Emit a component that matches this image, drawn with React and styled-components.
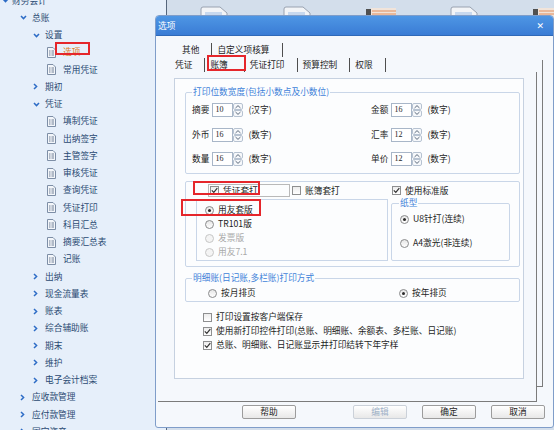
import styled, { createGlobalStyle } from "styled-components";

const GlobalStyle = createGlobalStyle`
  html, body {
    margin: 0;
    padding: 0;
  }
  body {
    width: 554px;
    height: 430px;
    overflow: hidden;
    font-family: "Noto Sans CJK SC", "Noto Sans", sans-serif;
    font-size: 8.7px;
    line-height: 12px;
    color: #1d1d1d;
  }
`;

const tree = [
  { level: 0, label: "财务会计", arrow: "down" },
  { level: 1, label: "总账", arrow: "down" },
  { level: 2, label: "设置", arrow: "down" },
  { level: 3, label: "选项", active: true },
  { level: 3, label: "常用凭证" },
  { level: 2, label: "期初", arrow: "right" },
  { level: 2, label: "凭证", arrow: "down" },
  { level: 3, label: "填制凭证" },
  { level: 3, label: "出纳签字" },
  { level: 3, label: "主管签字" },
  { level: 3, label: "审核凭证" },
  { level: 3, label: "查询凭证" },
  { level: 3, label: "凭证打印" },
  { level: 3, label: "科目汇总" },
  { level: 3, label: "摘要汇总表" },
  { level: 3, label: "记账" },
  { level: 2, label: "出纳", arrow: "right" },
  { level: 2, label: "现金流量表", arrow: "right" },
  { level: 2, label: "账表", arrow: "right" },
  { level: 2, label: "综合辅助账", arrow: "right" },
  { level: 2, label: "期末", arrow: "right" },
  { level: 2, label: "维护", arrow: "right" },
  { level: 2, label: "电子会计档案", arrow: "right" },
  { level: 1, label: "应收款管理", arrow: "right" },
  { level: 1, label: "应付款管理", arrow: "right" },
  { level: 1, label: "固定资产", arrow: "right" },
];

const indents = [2, 20, 33, 47];
const slots = [10, 12, 12, 16];

const desktopIcons = ["doc", "doc", "folder", "doc", "folder"];

const Screen = styled.div`
  position: relative;
  display: flex;
  width: 554px;
  height: 430px;
  overflow: hidden;
`;

const Sidebar = styled.div`
  width: 166px;
  flex-shrink: 0;
  background: #e6effa;
`;

const Tree = styled.ul`
  list-style: none;
  margin: -8px 0 0;
  padding: 0;
`;

const TreeRow = styled.li`
  display: flex;
  align-items: center;
  height: 17.26px;
  padding-left: ${(p) => indents[p.$level]}px;
  color: ${(p) => (p.$active ? "#dc7f2b" : "#2a4a72")};
  white-space: nowrap;
`;

const Slot = styled.span`
  display: flex;
  align-items: center;
  width: ${(p) => slots[p.$level]}px;
  flex-shrink: 0;
`;

const Workspace = styled.div`
  flex: 1;
  background: #d3deeb;
  border-left: 1px solid #56667c;
  display: flex;
  gap: 54px;
  padding: 6px 0 0 33px;
`;

const Dialog = styled.div`
  position: absolute;
  left: 155px;
  top: 15px;
  width: 399px;
  height: 413px;
  box-sizing: border-box;
  border: 1px solid #7f9dc9;
  border-radius: 4px 4px 3px 3px;
  background: #f5f8fc;
  display: flex;
  flex-direction: column;
  overflow: hidden;
`;

const TitleBar = styled.div`
  height: 20px;
  flex-shrink: 0;
  display: flex;
  align-items: center;
  justify-content: space-between;
  padding: 0 9px 0 2px;
  background: linear-gradient(#4e96e4, #3a7cd5);
  border-bottom: 1px solid #2f69b8;
  box-sizing: border-box;
  color: #fff;
`;

const Close = styled.span`
  font-family: "DejaVu Sans", sans-serif;
  font-weight: bold;
  font-size: 9px;
`;

const TabRow = styled.div`
  display: flex;
  height: 14px;
  margin: ${(p) => p.$top}px 0 0 ${(p) => p.$left}px;
`;

const Tab = styled.div`
  padding: 0 ${(p) => (p.$selected ? 16 : 12)}px 0 5px;
  border-right: 1px solid #4e4e4e;
  line-height: 14px;
  white-space: nowrap;
`;

const Page = styled.div`
  position: relative;
  width: 379px;
  height: 330px;
  box-sizing: border-box;
  margin: 0 0 0 2px;
  padding: 6px 12px 0 16px;
  border-right: 1px solid #7b7b7b;
  border-bottom: 1px solid #7b7b7b;

  &::after {
    content: "";
    position: absolute;
    right: -7px;
    top: -12px;
    bottom: 14px;
    width: 6px;
    border-right: 1px solid #7b7b7b;
    border-bottom: 1px solid #7b7b7b;
  }
`;

const Panel = styled.div`
  width: 350px;
  height: 301px;
  box-sizing: border-box;
  border: 1px solid #c6d1e0;
  background: #fcfdfe;
  padding: 0 3px 0 10px;
  display: flex;
  flex-direction: column;
`;

const Group = styled.fieldset`
  margin: ${(p) => p.$top}px 0 0;
  padding: ${(p) => p.$pad};
  border: 1px solid #c9d6e8;
  border-radius: 2px;
  min-width: 0;
`;

const Legend = styled.legend`
  padding: 0 1px;
  margin-left: ${(p) => p.$shift || 0}px;
  line-height: 12px;
  color: #3f82d9;
`;

const SpinGrid = styled.div`
  display: grid;
  grid-template-columns: 179px auto;
  row-gap: 10.5px;
`;

const SpinField = styled.div`
  display: flex;
  align-items: center;
  height: 14px;
`;

const FieldLabel = styled.span`
  margin-right: 3px;
  white-space: nowrap;
`;

const NumberBox = styled.span`
  width: 21px;
  height: 14px;
  box-sizing: border-box;
  border: 1px solid #a8b6c8;
  background: #fff;
  padding-left: 2px;
  font-family: "Liberation Serif", serif;
  font-size: 8px;
  line-height: 12px;
`;

const Unit = styled.span`
  margin-left: 5px;
  white-space: nowrap;
`;

const SetGrid = styled.div`
  display: grid;
  grid-template-columns: 192px 119px;
  column-gap: 3px;
`;

const Cell = styled.div`
  display: flex;
  align-items: center;
  height: 13px;
`;

const FocusFrame = styled.div`
  display: flex;
  align-items: center;
  width: 82px;
  height: 13px;
  box-sizing: border-box;
  margin-left: 12px;
  padding-left: 1px;
  border: 1px solid #b9b9b9;
`;

const Option = styled.label`
  display: flex;
  align-items: center;
  gap: 4px;
  height: 14px;
  margin-left: ${(p) => p.$left || 0}px;
  color: ${(p) => (p.$disabled ? "#a9a9a9" : "inherit")};
  white-space: nowrap;
`;

const TypeBox = styled.div`
  margin-top: 2px;
  height: 62px;
  box-sizing: border-box;
  border: 1px solid #c9d6e8;
  padding: 3px 0 0 8px;
  display: flex;
  flex-direction: column;
`;

const PaperList = styled.div`
  display: flex;
  flex-direction: column;
  gap: 10px;
`;

const ModeRow = styled.div`
  display: grid;
  grid-template-columns: 207px auto;
`;

const CheckList = styled.div`
  margin: 8px 0 0 18px;
  display: flex;
  flex-direction: column;
`;

const Box = styled.span`
  display: flex;
  align-items: center;
  justify-content: center;
  width: 9px;
  height: 9px;
  flex-shrink: 0;
  box-sizing: border-box;
  border: 1px solid #8e8f90;
  background: linear-gradient(#ececec, #ffffff);
`;

const Circle = styled.span`
  display: flex;
  align-items: center;
  justify-content: center;
  width: 9px;
  height: 9px;
  flex-shrink: 0;
  box-sizing: border-box;
  border-radius: 50%;
  border: 1px solid ${(p) => (p.$disabled ? "#c6c6c6" : "#8a8b8c")};
  background: ${(p) => (p.$disabled ? "#f4f4f4" : "linear-gradient(#e6e6e6, #ffffff)")};

  &::after {
    content: "";
    display: ${(p) => (p.$checked ? "block" : "none")};
    width: 3px;
    height: 3px;
    border-radius: 50%;
    background: #2a2a2a;
  }
`;

const ButtonRow = styled.div`
  display: flex;
  gap: 15px;
  margin-top: 3px;
  padding-left: 86px;
`;

const Button = styled.button`
  width: 54px;
  height: 14px;
  margin: 0 ${(p) => p.$after || 0}px 0 0;
  padding: 0;
  box-sizing: border-box;
  border: 1px solid ${(p) => (p.disabled ? "#cbd1d9" : "#9c9c9c")};
  border-radius: 2px;
  background: linear-gradient(#ffffff, #e8e8e8);
  font-family: inherit;
  font-size: 8.7px;
  line-height: 12px;
  color: ${(p) => (p.disabled ? "#9fb1c7" : "#1d1d1d")};
`;

const Mark = styled.div`
  position: absolute;
  left: ${(p) => p.$x}px;
  top: ${(p) => p.$y}px;
  width: ${(p) => p.$w}px;
  height: ${(p) => p.$h}px;
  box-sizing: border-box;
  border: 2px solid #e5262b;
  pointer-events: none;
`;

const Chevron = ({ dir }) =>
  dir === "down" ? (
    <svg width="7" height="5" viewBox="0 0 7 5">
      <path d="M1 1 L3.5 3.6 L6 1" fill="none" stroke="#2d6cc6" strokeWidth="1.5" />
    </svg>
  ) : (
    <svg width="5" height="7" viewBox="0 0 5 7">
      <path d="M1 1 L3.6 3.5 L1 6" fill="none" stroke="#2d6cc6" strokeWidth="1.5" />
    </svg>
  );

const DocIcon = () => (
  <svg width="9" height="11" viewBox="0 0 9 11">
    <path d="M0.5 0.5 H6 L8.5 3 V10.5 H0.5 Z" fill="#f3f6fa" stroke="#7d8ea6" />
    <path d="M2 4 H3.5 M4.5 4 H7 M2 6 H3.5 M4.5 6 H7 M2 8 H3.5 M4.5 8 H7" stroke="#6e7e95" />
  </svg>
);

const DesktopIcon = ({ kind }) =>
  kind === "doc" ? (
    <svg width="29" height="14" viewBox="0 0 29 14">
      <path d="M1 14 V3 Q1 1 3 1 H20 L27 7 V14" fill="#f2f4f7" stroke="#99a2b0" />
      <rect x="5" y="6" width="17" height="8" fill="#c7d8ee" />
    </svg>
  ) : (
    <svg width="30" height="14" viewBox="0 0 30 14">
      <rect x="0" y="3" width="5" height="11" fill="#505050" />
      <rect x="5" y="2" width="25" height="12" fill="#f1e4da" />
      <path d="M6 5 H30 M6 8 H30" stroke="#e08c5a" />
    </svg>
  );

const Spin = () => (
  <svg width="10" height="14" viewBox="0 0 10 14">
    <rect x="0.5" y="0.5" width="9" height="6" rx="1.5" fill="#f6f8fb" stroke="#b6c2d1" />
    <rect x="0.5" y="7.5" width="9" height="6" rx="1.5" fill="#f6f8fb" stroke="#b6c2d1" />
    <path d="M2.5 5 L5 2.6 L7.5 5" fill="none" stroke="#5d6b7d" />
    <path d="M2.5 9 L5 11.4 L7.5 9" fill="none" stroke="#5d6b7d" />
  </svg>
);

const Check = ({ checked, label, left }) => (
  <Option $left={left}>
    <Box>
      {checked && (
        <svg width="7" height="7" viewBox="0 0 7 7">
          <path d="M0.8 3.4 L2.8 5.4 L6.3 1.2" fill="none" stroke="#333" strokeWidth="1.2" />
        </svg>
      )}
    </Box>
    {label}
  </Option>
);

const Radio = ({ checked, disabled, label, left }) => (
  <Option $left={left} $disabled={disabled}>
    <Circle $checked={checked} $disabled={disabled} />
    {label}
  </Option>
);

const Spinner = ({ label, value, unit }) => (
  <SpinField>
    <FieldLabel>{label}</FieldLabel>
    <NumberBox>{value}</NumberBox>
    <Spin />
    <Unit>{unit}</Unit>
  </SpinField>
);

export default function App() {
  return (
    <>
      <GlobalStyle />
      <Screen>
        <Sidebar>
          <Tree>
            {tree.map((item) => (
              <TreeRow key={item.label} $level={item.level} $active={item.active}>
                <Slot $level={item.level}>
                  {item.arrow ? <Chevron dir={item.arrow} /> : <DocIcon />}
                </Slot>
                {item.label}
              </TreeRow>
            ))}
          </Tree>
        </Sidebar>

        <Workspace>
          {desktopIcons.map((kind, i) => (
            <DesktopIcon key={i} kind={kind} />
          ))}
        </Workspace>

        <Dialog>
          <TitleBar>
            <span>选项</span>
            <Close>✕</Close>
          </TitleBar>

          <TabRow $top={7} $left={21}>
            <Tab>其他</Tab>
            <Tab>自定义项核算</Tab>
          </TabRow>
          <TabRow $top={1} $left={14}>
            <Tab>凭证</Tab>
            <Tab $selected>账簿</Tab>
            <Tab>凭证打印</Tab>
            <Tab>预算控制</Tab>
            <Tab>权限</Tab>
          </TabRow>

          <Page>
            <Panel>
              <Group $top={7} $pad="5px 6px 7px">
                <Legend>打印位数宽度(包括小数点及小数位)</Legend>
                <SpinGrid>
                  <Spinner label="摘要" value="10" unit="(汉字)" />
                  <Spinner label="金额" value="16" unit="(数字)" />
                  <Spinner label="外币" value="16" unit="(数字)" />
                  <Spinner label="汇率" value="12" unit="(数字)" />
                  <Spinner label="数量" value="16" unit="(数字)" />
                  <Spinner label="单价" value="12" unit="(数字)" />
                </SpinGrid>
              </Group>

              <Group $top={7} $pad="2px 9px 5px 10px">
                <SetGrid>
                  <Cell>
                    <FocusFrame>
                      <Check checked label="凭证套打" />
                    </FocusFrame>
                    <Check label="账簿套打" left={2} />
                  </Cell>
                  <Cell>
                    <Check checked label="使用标准版" left={1} />
                  </Cell>
                  <TypeBox>
                    <Radio checked label="用友套版" />
                    <Radio label="TR101版" />
                    <Radio disabled label="发票版" />
                    <Radio disabled label="用友7.1" />
                  </TypeBox>
                  <Group $top={0} $pad="3px 0 8px 8px">
                    <Legend $shift={-1}>纸型</Legend>
                    <PaperList>
                      <Radio checked label="U8针打(连续)" />
                      <Radio label="A4激光(非连续)" />
                    </PaperList>
                  </Group>
                </SetGrid>
              </Group>

              <Group $top={5} $pad="2px 6px 1px">
                <Legend>明细账(日记账,多栏账)打印方式</Legend>
                <ModeRow>
                  <Radio label="按月排页" left={16} />
                  <Radio checked label="按年排页" />
                </ModeRow>
              </Group>

              <CheckList>
                <Check label="打印设置按客户端保存" />
                <Check checked label="使用新打印控件打印(总账、明细账、余额表、多栏账、日记账)" />
                <Check checked label="总账、明细账、日记账显示并打印结转下年字样" />
              </CheckList>
            </Panel>
          </Page>

          <ButtonRow>
            <Button $after={42}>帮助</Button>
            <Button disabled>编辑</Button>
            <Button>确定</Button>
            <Button>取消</Button>
          </ButtonRow>
        </Dialog>

        <Mark $x={55} $y={42} $w={35} $h={13} />
        <Mark $x={207} $y={55} $w={39} $h={16} />
        <Mark $x={193} $y={181} $w={67} $h={14} />
        <Mark $x={181} $y={199} $w={80} $h={17} />
      </Screen>
    </>
  );
}
